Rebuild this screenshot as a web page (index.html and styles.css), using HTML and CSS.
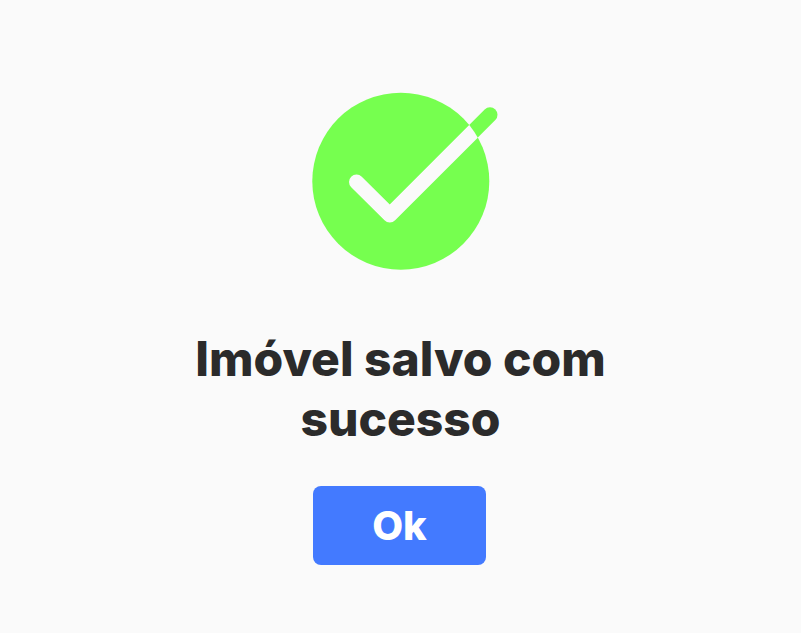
FILE: index.html
```html
<!DOCTYPE html>
<html lang="pt-BR">
<head>
<meta charset="utf-8">
<title>Imóvel salvo</title>
<link rel="stylesheet" href="styles.css">
</head>
<body>
<main class="screen">
  <svg class="icon" width="190" height="190" viewBox="0 0 190 190" aria-hidden="true">
    <defs>
      <clipPath id="disc"><circle cx="89.800" cy="89.200" r="88.500"/></clipPath>
    </defs>
    <path d="M78.800 123 L179 22.800" fill="none" stroke="#76ff4f" stroke-width="15" stroke-linecap="round"/>
    <circle cx="89.800" cy="89.200" r="88.500" fill="#76ff4f"/>
    <path clip-path="url(#disc)" d="M45.500 90 L78.800 123 L179 22.800" fill="none" stroke="#fafafa" stroke-width="15" stroke-linecap="round" stroke-linejoin="round"/>
  </svg>
  <h1 class="title">Imóvel salvo com<br>sucesso</h1>
  <button class="ok" type="button">Ok</button>
</main>
</body>
</html>
```
FILE: styles.css
```css
html, body { margin: 0; height: 100%; }
body { background: #fafafa; overflow: hidden; }
.screen {
  display: flex;
  flex-direction: column;
  align-items: center;
  padding-top: 92px;
  font-family: Inter, "Noto Sans", sans-serif;
}
.icon { display: block; margin-left: 10px; }
.title {
  margin: 47px 0 0;
  width: 500px;
  text-align: center;
  font-size: 48px;
  line-height: 60px;
  font-weight: 800;
  color: #2b2b2b;
}
.ok {
  margin: 37px 2px 0 0;
  width: 173px;
  height: 79px;
  border: 0;
  border-radius: 8px;
  background: #437aff;
  color: #fff;
  font: 800 40px Inter, "Noto Sans", sans-serif;
}
```
